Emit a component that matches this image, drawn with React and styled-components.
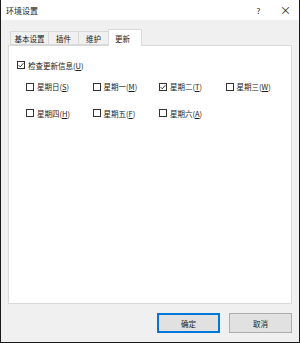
import React from "react";
import styled, { createGlobalStyle } from "styled-components";

const GlobalStyle = createGlobalStyle`
  html, body {
    margin: 0;
    padding: 0;
    background: #ffffff;
  }
  * {
    box-sizing: border-box;
  }
`;

const Window = styled.div`
  width: 300px;
  height: 343px;
  display: flex;
  flex-direction: column;
  background: #f0f0f0;
  border: 1px solid #1a1a1a;
  border-top: none;
  font-family: "Noto Sans CJK SC", "Microsoft YaHei", sans-serif;
  font-size: 7.5px;
  color: #1a1a1a;
`;

const TitleBar = styled.div`
  height: 20px;
  flex: none;
  display: flex;
  align-items: center;
  background: #ffffff;
  padding-left: 5px;
`;

const Title = styled.span`
  flex: 1;
  font-size: 8px;
`;

const TitleButton = styled.span`
  width: 27px;
  text-align: center;
  font-size: ${(props) => (props.big ? "11px" : "8px")};
  color: #222;
`;

const Body = styled.div`
  flex: 1;
  display: flex;
  flex-direction: column;
  padding: 9px 7px 9px 7px;
`;

const TabRow = styled.div`
  display: flex;
  align-items: flex-end;
  padding-left: 3px;
  height: 16px;
  position: relative;
  z-index: 1;
`;

const Tab = styled.div`
  height: ${(props) => (props.active ? "17px" : "14px")};
  margin-bottom: ${(props) => (props.active ? "-1px" : "0")};
  padding: 0 ${(props) => (props.active ? "6px" : "2px")};
  display: flex;
  align-items: center;
  white-space: nowrap;
  justify-content: ${(props) => (props.active ? "flex-start" : "center")};
  background: ${(props) => (props.active ? "#ffffff" : "#f0f0f0")};
  border: 1px solid #d9d9d9;
  border-bottom: ${(props) => (props.active ? "none" : "1px solid #d9d9d9")};
  margin-left: -1px;
  width: ${(props) => props.w}px;
`;

const Panel = styled.div`
  flex: 1;
  background: #ffffff;
  border: 1px solid #d9d9d9;
  padding: 13px 8px;
`;

const Check = styled.label`
  display: flex;
  align-items: center;
  gap: 3px;
  height: 12px;
  white-space: nowrap;
`;

const Box = styled.span`
  width: 8px;
  height: 8px;
  flex: none;
  border: 1px solid #333;
  background: #fff;
  display: flex;
  align-items: center;
  justify-content: center;
`;

const Days = styled.div`
  display: grid;
  grid-template-columns: repeat(4, 66.5px);
  row-gap: 14.5px;
  margin-top: 9.5px;
  padding-left: 9px;
`;

const Footer = styled.div`
  display: flex;
  justify-content: flex-end;
  gap: 9px;
  margin-top: 9px;
`;

const Button = styled.div`
  width: 63px;
  height: 20px;
  display: flex;
  align-items: center;
  justify-content: center;
  background: #e1e1e1;
  border: 1px solid ${(props) => (props.primary ? "#0078d7" : "#adadad")};
  box-shadow: ${(props) => (props.primary ? "inset 0 0 0 1px #0078d7" : "none")};
`;

function CheckBox({ checked, children }) {
  return (
    <Check>
      <Box>
        {checked && (
          <svg width="6" height="6" viewBox="0 0 6 6">
            <path d="M0.6 3.1 L2.3 4.8 L5.4 1.2" fill="none" stroke="#222" strokeWidth="0.9" />
          </svg>
        )}
      </Box>
      <span>{children}</span>
    </Check>
  );
}

const days = [
  { label: "星期日", key: "S", checked: false },
  { label: "星期一", key: "M", checked: false },
  { label: "星期二", key: "T", checked: true },
  { label: "星期三", key: "W", checked: false },
  { label: "星期四", key: "H", checked: false },
  { label: "星期五", key: "F", checked: false },
  { label: "星期六", key: "A", checked: false },
];

const tabs = [
  { label: "基本设置", w: 39 },
  { label: "插件", w: 31 },
  { label: "维护", w: 31 },
  { label: "更新", w: 34, active: true },
];

export default function App() {
  return (
    <>
      <GlobalStyle />
      <Window>
        <TitleBar>
          <Title>环境设置</Title>
          <TitleButton>?</TitleButton>
          <TitleButton big>×</TitleButton>
        </TitleBar>
        <Body>
          <TabRow>
            {tabs.map((t) => (
              <Tab key={t.label} active={t.active} w={t.w}>
                {t.label}
              </Tab>
            ))}
          </TabRow>
          <Panel>
            <CheckBox checked>
              检查更新信息(<u>U</u>)
            </CheckBox>
            <Days>
              {days.map((d) => (
                <CheckBox key={d.key} checked={d.checked}>
                  {d.label}(<u>{d.key}</u>)
                </CheckBox>
              ))}
            </Days>
          </Panel>
          <Footer>
            <Button primary>确定</Button>
            <Button>取消</Button>
          </Footer>
        </Body>
      </Window>
    </>
  );
}
